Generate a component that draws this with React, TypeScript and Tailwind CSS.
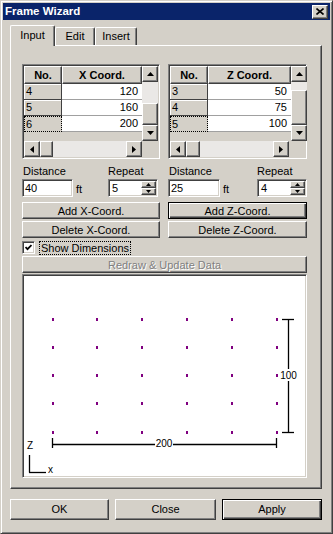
import React from "react";

const raised =
  "border border-t-white border-l-white border-r-[#404040] border-b-[#404040] shadow-[inset_-1px_-1px_#808080] bg-[#d4d0c8]";
const sunken =
  "border border-t-[#808080] border-l-[#808080] border-r-white border-b-white shadow-[inset_1px_1px_#404040,inset_-1px_-1px_#d4d0c8]";
const defaultBtn =
  "border border-black shadow-[inset_1px_1px_#fff,inset_-1px_-1px_#404040,inset_-2px_-2px_#808080] bg-[#d4d0c8]";

type Dir = "up" | "down" | "left" | "right";

function Arrow({ dir, small }: { dir: Dir; small?: boolean }) {
  const s = small ? 5 : 7;
  const h = small ? 3 : 4;
  if (dir === "up" || dir === "down") {
    const pts = dir === "up" ? `${s / 2},0 ${s},${h} 0,${h}` : `0,0 ${s},0 ${s / 2},${h}`;
    return (
      <svg width={s} height={h} viewBox={`0 0 ${s} ${h}`}>
        <polygon points={pts} fill="#000" />
      </svg>
    );
  }
  const pts = dir === "left" ? `0,${s / 2} ${h},0 ${h},${s}` : `0,0 ${h},${s / 2} 0,${s}`;
  return (
    <svg width={h} height={s} viewBox={`0 0 ${h} ${s}`}>
      <polygon points={pts} fill="#000" />
    </svg>
  );
}

function ScrollBtn({ dir }: { dir: Dir }) {
  return (
    <div className={`${raised} w-[16px] h-[16px] shrink-0 flex items-center justify-center`}>
      <Arrow dir={dir} />
    </div>
  );
}

function Grid({
  label,
  valueWidth,
  rows,
  track,
  thumb,
  hthumb,
}: {
  label: string;
  valueWidth: number;
  rows: [string, string][];
  track: number;
  thumb: number;
  hthumb: number;
}) {
  return (
    <div className={`${sunken} h-[95px] bg-[#d4d0c8] flex flex-col p-px`}>
      <div className="flex h-[75px]">
        <div className="flex-1 flex flex-col">
          <div className="flex h-[18px] font-bold">
            <div className={`${raised} w-[38px] flex items-center justify-center`}>No.</div>
            <div className={`${raised} flex-1 flex items-center justify-center`} style={{ width: valueWidth }}>
              {label}
            </div>
          </div>
          {rows.map(([n, v], i) => (
            <div key={n} className="flex h-[16px]">
              <div
                className={
                  i === rows.length - 1
                    ? "w-[38px] bg-[#d4d0c8] border border-dotted border-black pl-px leading-[14px]"
                    : "w-[38px] bg-[#d4d0c8] border-r border-b border-[#404040] shadow-[inset_1px_1px_#fff] pl-[2px] leading-[15px]"
                }
              >
                {n}
              </div>
              <div className="flex-1 bg-white border-b border-[#a0a0a0] text-right pr-[4px] leading-[15px]">{v}</div>
            </div>
          ))}
        </div>
        <div className="w-[16px] flex flex-col">
          <ScrollBtn dir="up" />
          <div className="bg-[#eae8e6]" style={{ height: track }} />
          <div className={raised} style={{ height: thumb }} />
          <ScrollBtn dir="down" />
        </div>
      </div>
      <div className="flex h-[16px]">
        <ScrollBtn dir="left" />
        <div className={raised} style={{ width: hthumb }} />
        <div className="flex-1 bg-[#eae8e6]" />
        <ScrollBtn dir="right" />
        <div className="w-[16px] bg-[#d4d0c8]" />
      </div>
    </div>
  );
}

function Spin({ value }: { value: string }) {
  return (
    <div className={`${sunken} w-[50px] h-[18px] bg-white flex p-px`}>
      <div className="flex-1 pl-[2px] leading-[15px]">{value}</div>
      <div className="w-[15px] flex flex-col">
        <div className={`${raised} h-[7px] flex items-center justify-center`}>
          <Arrow dir="up" small />
        </div>
        <div className={`${raised} h-[7px] flex items-center justify-center`}>
          <Arrow dir="down" small />
        </div>
      </div>
    </div>
  );
}

function Column({
  axis,
  width,
  repeatOffset,
  inputWidth,
  distance,
  repeat,
  grid,
  isDefault,
}: {
  axis: string;
  width: number;
  repeatOffset: number;
  inputWidth: number;
  distance: string;
  repeat: string;
  grid: React.ReactNode;
  isDefault?: boolean;
}) {
  return (
    <div className="flex flex-col" style={{ width }}>
      {grid}
      <div className="flex mt-[6px] h-[14px] leading-[13px]">
        <div className="pl-px" style={{ width: repeatOffset }}>
          Distance
        </div>
        <div>Repeat</div>
      </div>
      <div className="flex h-[18px]">
        <div className="flex" style={{ width: repeatOffset }}>
          <div className={`${sunken} h-[18px] bg-white pl-[2px] leading-[16px]`} style={{ width: inputWidth }}>
            {distance}
          </div>
          <div className="ml-[3px] pt-[4px] leading-[13px]">ft</div>
        </div>
        <Spin value={repeat} />
      </div>
      <button className={`${isDefault ? defaultBtn : raised} mt-[5px] h-[17px] leading-[14px]`}>
        Add {axis}-Coord.
      </button>
      <button className={`${raised} mt-[2px] h-[17px] leading-[14px]`}>Delete {axis}-Coord.</button>
    </div>
  );
}

function Canvas() {
  const xs = [28, 72, 117, 162, 207, 252];
  const ys = [43, 71, 99, 127, 156];
  return (
    <div className={`${sunken} mt-px h-[204px] w-[285px] bg-white p-px`}>
      <svg width={281} height={200} viewBox="0 0 281 200" className="block">
        {ys.map((y) =>
          xs.map((x) => <rect key={`${x}-${y}`} x={x} y={y - 1} width={2} height={3} fill="#800080" />)
        )}
        <g stroke="#000" strokeWidth={1.3} fill="none">
          <line x1={28} y1={168.5} x2={252} y2={168.5} />
          <line x1={28.5} y1={162} x2={28.5} y2={172} />
          <line x1={252.5} y1={162} x2={252.5} y2={172} />
          <line x1={264.5} y1={43} x2={264.5} y2={157} />
          <line x1={258} y1={43.5} x2={270} y2={43.5} />
          <line x1={258} y1={156.5} x2={270} y2={156.5} />
          <line x1={5.5} y1={179} x2={5.5} y2={196.5} />
          <line x1={5} y1={196.5} x2={22} y2={196.5} />
        </g>
        <rect x={131} y={162} width={18} height={11} fill="#fff" />
        <text x={140} y={171} textAnchor="middle" fontSize={10} fill="#000">
          200
        </text>
        <rect x={256} y={93} width={17} height={12} fill="#fff" />
        <text x={264.5} y={103} textAnchor="middle" fontSize={10} fill="#000">
          100
        </text>
        <text x={3} y={173} fontSize={10} fill="#000">
          Z
        </text>
        <text x={24} y={197} fontSize={10} fill="#000">
          x
        </text>
      </svg>
    </div>
  );
}

export default function App() {
  return (
    <div className="w-[333px] h-[534px] bg-[#d4d0c8] border border-t-[#d4d0c8] border-l-[#d4d0c8] border-r-[#404040] border-b-[#404040] shadow-[inset_1px_1px_#fff,inset_-1px_-1px_#808080] flex flex-col text-[11px] text-black font-['Liberation_Sans',Arial,sans-serif] select-none">
      {/* Title bar */}
      <div className="mx-[2px] mt-[2px] h-[17px] bg-[#0a246a] flex items-center justify-between pl-[2px] pr-[2px]">
        <span className="text-white font-bold text-[11.5px] leading-none">Frame Wizard</span>
        <div className={`${raised} w-[16px] h-[14px] flex items-center justify-center`}>
          <svg width={8} height={7} viewBox="0 0 8 7">
            <path d="M0.5 0.5 L7.5 6.5 M7.5 0.5 L0.5 6.5" stroke="#000" strokeWidth={1.6} />
          </svg>
        </div>
      </div>

      {/* Tabs */}
      <div className="ml-[9px] mt-[5px] h-[20px] flex items-end">
        <div className="relative z-10 -mb-px w-[45px] h-[21px] bg-[#d4d0c8] border-t border-l border-white border-r border-r-[#404040] shadow-[inset_-1px_0_#808080] rounded-t-[2px] flex items-center justify-center pb-[2px]">
          Input
        </div>
        <div className="w-[40px] h-[18px] border-t border-l border-white border-r border-r-[#404040] shadow-[inset_-1px_0_#808080] rounded-t-[2px] flex items-center justify-center">
          Edit
        </div>
        <div className="w-[42px] h-[18px] border-t border-l border-white border-r border-r-[#404040] shadow-[inset_-1px_0_#808080] rounded-t-[2px] flex items-center justify-center">
          Insert
        </div>
      </div>

      {/* Tab panel */}
      <div className="ml-[9px] w-[312px] h-[444px] border border-t-white border-l-white border-r-[#404040] border-b-[#404040] shadow-[inset_-1px_-1px_#808080] pt-[18px] pl-[11px] flex flex-col">
        <div className="flex gap-[8px]">
          <Column
            axis="X"
            width={138}
            repeatOffset={86}
            inputWidth={51}
            distance="40"
            repeat="5"
            grid={
              <Grid
                label="X Coord."
                valueWidth={80}
                rows={[
                  ["4", "120"],
                  ["5", "160"],
                  ["6", "200"],
                ]}
                track={21}
                thumb={22}
                hthumb={13}
              />
            }
          />
          <Column
            axis="Z"
            width={139}
            repeatOffset={89}
            inputWidth={52}
            distance="25"
            repeat="4"
            isDefault
            grid={
              <Grid
                label="Z Coord."
                valueWidth={83}
                rows={[
                  ["3", "50"],
                  ["4", "75"],
                  ["5", "100"],
                ]}
                track={8}
                thumb={35}
                hthumb={14}
              />
            }
          />
        </div>

        <div className="mt-[3px] h-[13px] flex items-center">
          <div className={`${sunken} w-[13px] h-[13px] bg-white flex items-center justify-center`}>
            <svg width={7} height={7} viewBox="0 0 7 7">
              <path d="M0.5 3 L2.5 5.2 L6.5 1" stroke="#000" strokeWidth={1.8} fill="none" />
            </svg>
          </div>
          <span className="ml-[4px] border border-dotted border-black px-px leading-[12px]">Show Dimensions</span>
        </div>

        <button
          className={`${raised} mt-[2px] w-[285px] h-[17px] leading-[14px] text-[#808080] [text-shadow:1px_1px_#fff]`}
        >
          Redraw &amp; Update Data
        </button>

        <Canvas />
      </div>

      {/* Bottom buttons */}
      <div className="ml-[9px] mt-[10px] flex gap-[6px]">
        <button className={`${raised} w-[99px] h-[21px]`}>OK</button>
        <button className={`${raised} w-[101px] h-[21px]`}>Close</button>
        <button className={`${defaultBtn} w-[100px] h-[21px]`}>Apply</button>
      </div>
    </div>
  );
}
